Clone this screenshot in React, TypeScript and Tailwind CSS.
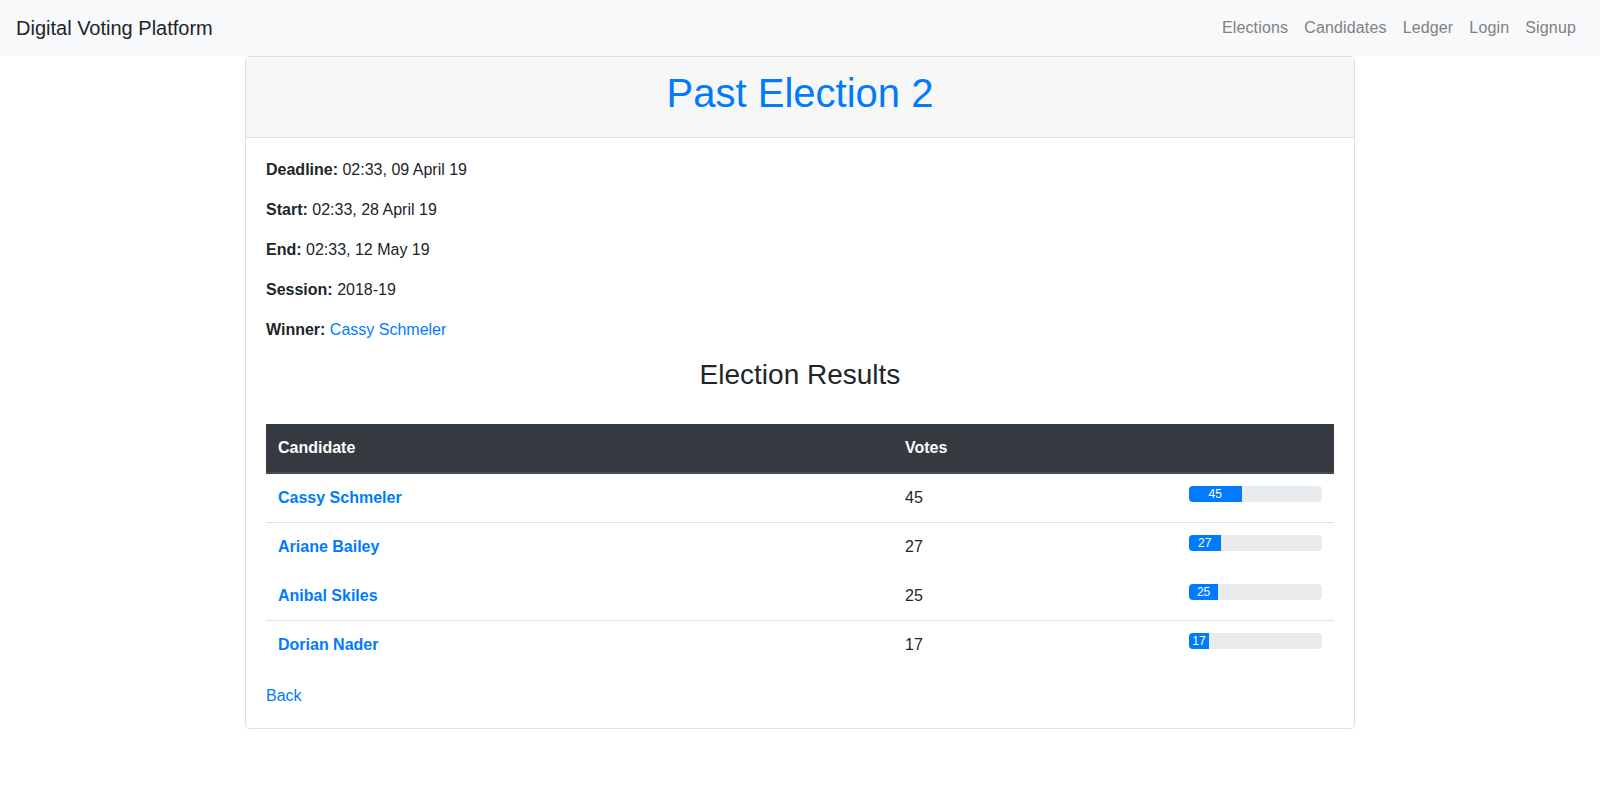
import React from "react";

type Result = {
  name: string;
  votes: number;
  lineAbove: boolean;
};

const results: Result[] = [
  { name: "Cassy Schmeler", votes: 45, lineAbove: false },
  { name: "Ariane Bailey", votes: 27, lineAbove: true },
  { name: "Anibal Skiles", votes: 25, lineAbove: false },
  { name: "Dorian Nader", votes: 17, lineAbove: true },
];

const details: [string, string][] = [
  ["Deadline:", "02:33, 09 April 19"],
  ["Start:", "02:33, 28 April 19"],
  ["End:", "02:33, 12 May 19"],
  ["Session:", "2018-19"],
];

const navLinks = ["Elections", "Candidates", "Ledger", "Login", "Signup"];

export default function App() {
  const total = results.reduce((sum, r) => sum + r.votes, 0);

  return (
    <div className="min-h-screen bg-white text-[#212529] font-['Liberation_Sans',Arial,sans-serif] text-base leading-6">
      <nav className="flex h-14 items-center justify-between bg-[#f8f9fa] px-4">
        <a className="text-[20px] leading-[30px] text-[#212529]" href="#">
          Digital Voting Platform
        </a>
        <ul className="flex">
          {navLinks.map((link) => (
            <li key={link}>
              <a className="block px-2 py-2 tracking-[0.15px] text-[#808183]" href="#">
                {link}
              </a>
            </li>
          ))}
        </ul>
      </nav>

      <main className="mx-auto w-[1110px]">
        <section className="rounded border border-[#dfdfdf] bg-white">
          <header className="border-b border-[#dfdfdf] bg-[#f7f7f7] px-5 pt-3 pb-3">
            <h1 className="mb-2 text-center text-[40px] leading-[48px] text-[#007bff]">Past Election 2</h1>
          </header>

          <div className="p-5">
            {details.map(([label, value]) => (
              <p key={label} className="mb-4">
                <b>{label}</b> {value}
              </p>
            ))}
            <p className="mb-4">
              <b>Winner:</b>{" "}
              <a className="text-[#007bff]" href="#">
                Cassy Schmeler
              </a>
            </p>

            <h3 className="mb-2 text-center text-[28px] leading-[33.6px]">Election Results</h3>
            <br />

            <table className="mb-[15px] w-full border-collapse">
              <thead>
                <tr className="bg-[#343a40] text-white">
                  <th className="w-[627px] border-b-2 border-[#454d55] p-3 text-left font-bold">Candidate</th>
                  <th className="w-[284px] border-b-2 border-[#454d55] p-3 text-left font-bold">Votes</th>
                  <th className="border-b-2 border-[#454d55] p-3"></th>
                </tr>
              </thead>
              <tbody>
                {results.map((r) => {
                  const line = r.lineAbove ? "border-t border-[#dee2e6]" : "border-t border-white";
                  return (
                    <tr key={r.name}>
                      <td className={`${line} p-3 align-top`}>
                        <a className="font-bold text-[#007bff]" href="#">
                          {r.name}
                        </a>
                      </td>
                      <td className={`${line} p-3 align-top`}>{r.votes}</td>
                      <td className={`${line} px-3 pt-[12px] pb-3 align-top`}>
                        <div className="flex h-4 w-full overflow-hidden rounded bg-[#e9ecef] text-xs">
                          <div
                            className="flex flex-col justify-center bg-[#007bff] text-center leading-4 text-white"
                            style={{ width: `${(r.votes / total) * 100}%` }}
                          >
                            {r.votes}
                          </div>
                        </div>
                      </td>
                    </tr>
                  );
                })}
              </tbody>
            </table>

            <a className="text-[#007bff]" href="#">
              Back
            </a>
          </div>
        </section>
      </main>
    </div>
  );
}
